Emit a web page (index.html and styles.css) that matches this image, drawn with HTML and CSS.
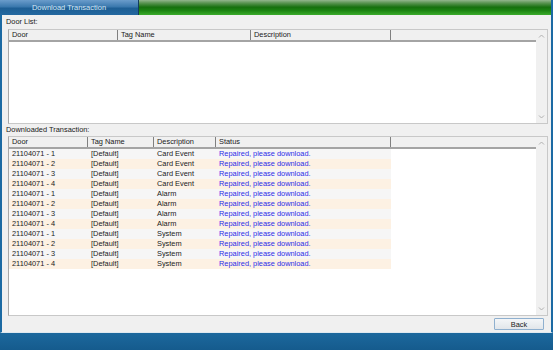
FILE: index.html
```html
<!DOCTYPE html>
<html>
	<head>
		<link rel="stylesheet" href="styles.css">
	</head>
	<body>
		<div class="window">
			<div class="tabs">
				<div class="tab">Download Transaction</div>
				<div class="tabfill"></div>
			</div>
			<div class="main">
				<div class="label lbl1">Door List:</div>
				<div class="list list1">
					<div class="grid">
						<div class="head cols1">
							<div class="hc">Door</div>
							<div class="hc">Tag Name</div>
							<div class="hc">Description</div>
							<div class="hc last"></div>
						</div>
					</div>
					<div class="scroll">
						<svg width="7" height="4" viewBox="0 0 7 4"><polyline points="1,3.5 3.5,1 6,3.5" fill="none" stroke="#b0b0b0" stroke-width="1"/></svg>
						<svg width="7" height="4" viewBox="0 0 7 4"><polyline points="1,0.5 3.5,3 6,0.5" fill="none" stroke="#b0b0b0" stroke-width="1"/></svg>
					</div>
				</div>
				<div class="label lbl2">Downloaded Transaction:</div>
				<div class="list list2">
					<div class="grid">
						<div class="head cols2">
							<div class="hc">Door</div>
							<div class="hc">Tag Name</div>
							<div class="hc">Description</div>
							<div class="hc">Status</div>
							<div class="hc last"></div>
						</div>
						<div class="row cols2r"><div>21104071 - 1</div><div>[Default]</div><div>Card Event</div><div class="st">Repaired, please download.</div></div>
						<div class="row cols2r alt"><div>21104071 - 2</div><div>[Default]</div><div>Card Event</div><div class="st">Repaired, please download.</div></div>
						<div class="row cols2r"><div>21104071 - 3</div><div>[Default]</div><div>Card Event</div><div class="st">Repaired, please download.</div></div>
						<div class="row cols2r alt"><div>21104071 - 4</div><div>[Default]</div><div>Card Event</div><div class="st">Repaired, please download.</div></div>
						<div class="row cols2r"><div>21104071 - 1</div><div>[Default]</div><div>Alarm</div><div class="st">Repaired, please download.</div></div>
						<div class="row cols2r alt"><div>21104071 - 2</div><div>[Default]</div><div>Alarm</div><div class="st">Repaired, please download.</div></div>
						<div class="row cols2r"><div>21104071 - 3</div><div>[Default]</div><div>Alarm</div><div class="st">Repaired, please download.</div></div>
						<div class="row cols2r alt"><div>21104071 - 4</div><div>[Default]</div><div>Alarm</div><div class="st">Repaired, please download.</div></div>
						<div class="row cols2r"><div>21104071 - 1</div><div>[Default]</div><div>System</div><div class="st">Repaired, please download.</div></div>
						<div class="row cols2r alt"><div>21104071 - 2</div><div>[Default]</div><div>System</div><div class="st">Repaired, please download.</div></div>
						<div class="row cols2r"><div>21104071 - 3</div><div>[Default]</div><div>System</div><div class="st">Repaired, please download.</div></div>
						<div class="row cols2r alt"><div>21104071 - 4</div><div>[Default]</div><div>System</div><div class="st">Repaired, please download.</div></div>
					</div>
					<div class="scroll">
						<svg width="7" height="4" viewBox="0 0 7 4"><polyline points="1,3.5 3.5,1 6,3.5" fill="none" stroke="#b0b0b0" stroke-width="1"/></svg>
						<svg width="7" height="4" viewBox="0 0 7 4"><polyline points="1,0.5 3.5,3 6,0.5" fill="none" stroke="#b0b0b0" stroke-width="1"/></svg>
					</div>
				</div>
				<div class="footer">
					<button class="btn">Back</button>
				</div>
			</div>
			<div class="bottom"></div>
		</div>
	</body>
</html>
```

FILE: styles.css
```css
body{
	margin: 0;
	font-family: "Liberation Sans", Arial, sans-serif;
	font-size: 7.4px;
	color: #1a1a1a;
	overflow: hidden;
}
.window{
	width: 553px;
	height: 350px;
	display: flex;
	flex-direction: column;
}
.tabs{
	height: 15px;
	display: flex;
}
.tab{
	width: 138px;
	border-right: 1px solid #123c5e;
	background: linear-gradient(#6a9ccb, #3a78ad 45%, #1d5e94 55%, #2468a0);
	color: #d4e6f4;
	font-size: 7.5px;
	line-height: 15px;
	text-align: center;
}
.tabfill{
	flex: 1;
	background: linear-gradient(#93b68e, #5a9452 20%, #16700e 48%, #1c8412 70%, #3bab2b);
	border-right: 2px solid #1c6aa3;
}
.main{
	height: 318px;
	background-color: #f0f0f0;
	border-left: 2px solid #1c6aa3;
	border-right: 2px solid #1c6aa3;
	border-bottom: 1px solid #dfe8ef;
	padding: 0 3px 0 4px;
	box-sizing: border-box;
	display: flex;
	flex-direction: column;
}
.label{
	line-height: 14px;
	height: 14px;
}
.lbl2{
	height: 12px;
	line-height: 12px;
}
.list{
	margin-left: 2px;
	display: flex;
	background-color: #fff;
	border: 1px solid #c8c8c8;
	border-left-color: #a8a8a8;
	box-sizing: border-box;
}
.list1{
	height: 95px;
}
.list2{
	height: 180px;
}
.grid{
	flex: 1;
	display: flex;
	flex-direction: column;
}
.head{
	display: grid;
	height: 12px;
	background-color: #f0f0f0;
	border-bottom: 2px solid #a4a4a4;
	box-sizing: border-box;
}
.cols1{
	grid-template-columns: 109px 133px 140px 1fr;
}
.cols2{
	grid-template-columns: 79px 66px 62px 175px 1fr;
}
.hc{
	padding-left: 3px;
	line-height: 10px;
	border-right: 1px solid #808080;
}
.hc.last{
	border-right: none;
}
.row{
	display: grid;
	height: 10px;
	line-height: 10px;
	background-color: #f6f6f6;
	width: 382px;
}
.cols2r{
	grid-template-columns: 79px 66px 62px 175px;
}
.row div{
	padding-left: 3px;
	white-space: nowrap;
}
.alt{
	background-color: #fdf1e3;
}
.st{
	color: #2c2ce8;
}
.scroll{
	width: 11px;
	background-color: #f0f0f0;
	display: flex;
	flex-direction: column;
	justify-content: space-between;
	align-items: center;
	padding: 4px 0;
	box-sizing: border-box;
}
.footer{
	flex: 1;
	display: flex;
	justify-content: flex-end;
	align-items: center;
	padding-right: 4px;
}
.btn{
	width: 50px;
	height: 12px;
	padding: 0;
	font-family: "Liberation Sans", Arial, sans-serif;
	font-size: 7.4px;
	color: #1a1a1a;
	border: 1px solid #8fb0cf;
	border-radius: 1px;
	background: linear-gradient(#f4f6f8, #e2e6ea);
}
.bottom{
	flex: 1;
	background: linear-gradient(#1c689d, #155b8d);
}
```
